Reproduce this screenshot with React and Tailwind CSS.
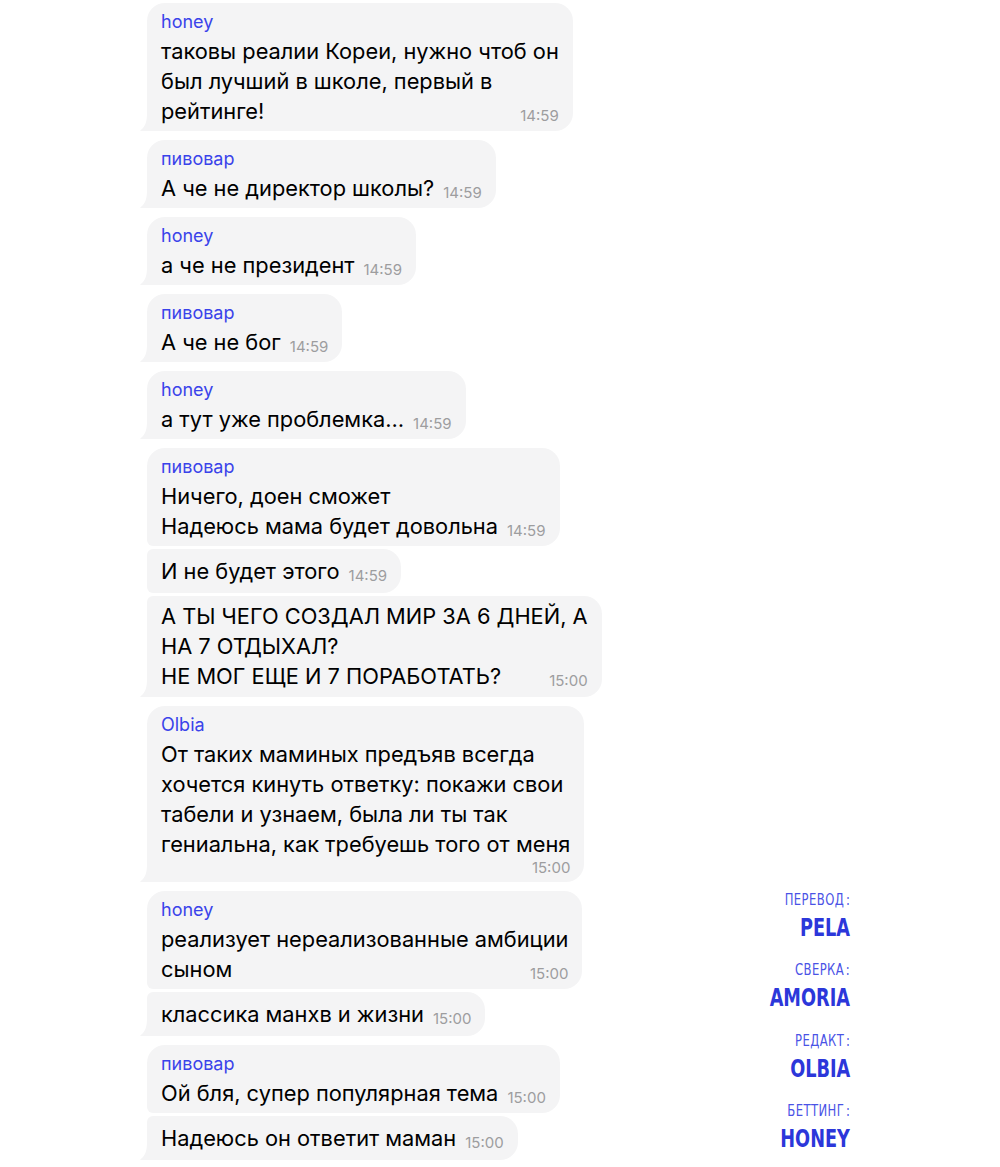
const messages = [
  { name: 'honey', lines: ['таковы реалии Кореи, нужно чтоб он', 'был лучший в школе, первый в', 'рейтинге!'], time: '14:59', group: 1 },
  { name: 'пивовар', lines: ['А че не директор школы?'], time: '14:59', group: 2 },
  { name: 'honey', lines: ['а че не президент'], time: '14:59', group: 3 },
  { name: 'пивовар', lines: ['А че не бог'], time: '14:59', group: 4 },
  { name: 'honey', lines: ['а тут уже проблемка…'], time: '14:59', group: 5 },
  { name: 'пивовар', lines: ['Ничего, доен сможет', 'Надеюсь мама будет довольна'], time: '14:59', group: 6 },
  { lines: ['И не будет этого'], time: '14:59', group: 6 },
  { lines: ['А ТЫ ЧЕГО СОЗДАЛ МИР ЗА 6 ДНЕЙ, А', 'НА 7 ОТДЫХАЛ?', 'НЕ МОГ ЕЩЕ И 7 ПОРАБОТАТЬ?'], time: '15:00', group: 6 },
  { name: 'Olbia', lines: ['От таких маминых предъяв всегда', 'хочется кинуть ответку: покажи свои', 'табели и узнаем, была ли ты так', 'гениальна, как требуешь того от меня'], time: '15:00', group: 7, timeOwnLine: true },
  { name: 'honey', lines: ['реализует нереализованные амбиции', 'сыном'], time: '15:00', group: 8 },
  { lines: ['классика манхв и жизни'], time: '15:00', group: 8 },
  { name: 'пивовар', lines: ['Ой бля, супер популярная тема'], time: '15:00', group: 9 },
  { lines: ['Надеюсь он ответит маман'], time: '15:00', group: 9 },
]

const credits = [
  { role: 'перевод', who: 'PELA' },
  { role: 'сверка', who: 'AMORIA' },
  { role: 'редакт', who: 'OLBIA' },
  { role: 'беттинг', who: 'HONEY' },
]

const Tail = () => (
  <svg className="absolute -left-[7px] bottom-0" width="12" height="17" viewBox="0 0 12 17">
    <path d="M7 0 C7 8 5 13 0.5 16.2 C0 16.6 0.3 17 1 17 L12 17 L12 0 Z" fill="#f4f4f5" />
  </svg>
)

const Bubble = ({ msg, first, last }) => {
  // rounded corners depend on position in group
  let corners = 'rounded-r-[18px]'
  if (first && last) corners += ' rounded-tl-[18px] rounded-bl-none'
  else if (first) corners += ' rounded-tl-[18px] rounded-bl-[6px]'
  else if (last) corners += ' rounded-tl-[6px] rounded-bl-none'
  else corners += ' rounded-l-[6px]'

  const pad = msg.name ? 'pt-2 pb-[5px]' : msg.lines.length > 1 ? 'pt-[5px] pb-[5.5px]' : 'pt-[7px] pb-[6.5px]'
  const lastIdx = msg.lines.length - 1

  return (
    <div className={`relative self-start bg-[#f4f4f5] px-[14px] ${pad} ${corners} ${first ? 'mt-[9.5px]' : 'mt-[3.5px]'}`}>
      {msg.name && (
        <div className="mb-[2.5px] text-[18px] leading-[22px] text-[#3a43ea]">{msg.name}</div>
      )}
      <div className="text-[21.8px] leading-[30px] text-black whitespace-nowrap">
        {msg.lines.map((line, i) =>
          i === lastIdx && !msg.timeOwnLine ? (
            <div key={i} className="flex items-end justify-between gap-[9px]">
              <span>{line}</span>
              <span className="mb-[1px] text-[15px] leading-[18px] text-[#9d9d9f]">{msg.time}</span>
            </div>
          ) : (
            <div key={i}>{line}</div>
          )
        )}
      </div>
      {msg.timeOwnLine && (
        <div className="text-right text-[15px] leading-[18px] text-[#9d9d9f]">{msg.time}</div>
      )}
      {last && <Tail />}
    </div>
  )
}

export default function App() {
  return (
    <div
      className="w-full h-[1167px] overflow-hidden bg-white flex"
      style={{ fontFamily: 'Inter, "Noto Sans", sans-serif' }}
    >
      <div className="flex flex-col pl-[147px] -mt-[6.5px]">
        {messages.map((msg, i) => {
          const prev = messages[i - 1]
          const next = messages[i + 1]
          const first = !prev || prev.group !== msg.group
          const last = !next || next.group !== msg.group
          return <Bubble key={i} msg={msg} first={first} last={last} />
        })}
      </div>

      <div
        className="ml-auto mr-[150px] self-end mb-[14px] flex flex-col items-end gap-[18.5px]"
        style={{ fontFamily: '"DejaVu Sans Condensed", "DejaVu Sans", sans-serif' }}
      >
        {credits.map((c) => (
          <div key={c.who} className="flex flex-col items-end">
            <div className="origin-right scale-x-[0.86] text-[15px] leading-[20px] uppercase tracking-[0.5px] text-[#4a53e6]">
              {c.role}
              <span className="ml-[2px]">:</span>
            </div>
            <div className="mt-[4px] origin-right scale-x-[0.82] text-[24px] leading-[28px] font-bold text-[#2c37da]">{c.who}</div>
          </div>
        ))}
      </div>
    </div>
  )
}
